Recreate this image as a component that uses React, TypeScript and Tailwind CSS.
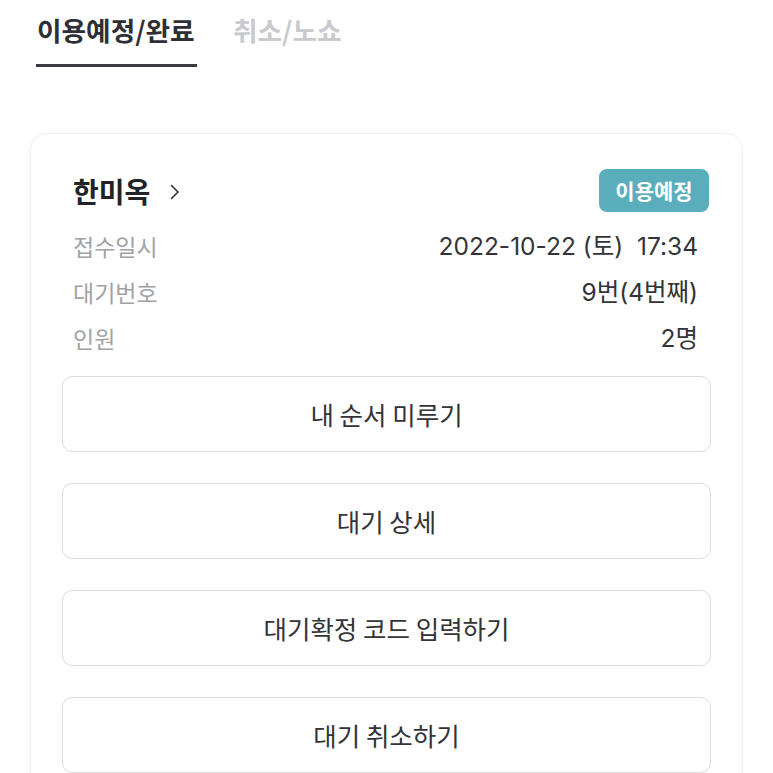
import React from "react";

const font = { fontFamily: '"Noto Sans CJK KR", "Noto Sans", sans-serif' };
const valFont = { fontFamily: 'Inter, "Noto Sans CJK KR", sans-serif' };

export default function App() {
  const rows: [string, string][] = [
    ["접수일시", "2022-10-22 (토)  17:34"],
    ["대기번호", "9번(4번째)"],
    ["인원", "2명"],
  ];
  const buttons = ["내 순서 미루기", "대기 상세", "대기확정 코드 입력하기", "대기 취소하기"];
  return (
    <div className="w-[773px] h-[773px] overflow-hidden bg-white px-[30px]" style={font}>
      <div className="flex pl-[6px] gap-[36px]">
        <div className="flex flex-col w-[161px]">
          <div className="pt-[12px] pb-[16px] pl-[1px] text-[26.7px] leading-[36px] font-bold text-[#2f3036] whitespace-pre">
            이용예정/완료
          </div>
          <div className="h-[3px] bg-[#3a3b42]" />
        </div>
        <div className="pt-[12px] text-[26.7px] leading-[36px] font-bold text-[#c9cace] whitespace-pre">
          취소/노쇼
        </div>
      </div>
      <div className="mt-[66px] rounded-t-[16px] border border-[#f0f0f2] px-[31px] pt-[35px] pb-[40px]">
        <div className="flex items-center justify-between pl-[11px] pr-[2px] h-[43px]">
          <div className="flex items-center gap-[19px]">
            <span className="text-[28px] font-bold text-[#222327] leading-none">한미옥</span>
            <svg width="12" height="18" viewBox="0 0 12 18" className="mt-[2px]">
              <path d="M2.5 2.5 L9 9 L2.5 15.5" fill="none" stroke="#333" strokeWidth="1.6" strokeLinecap="round" strokeLinejoin="round" />
            </svg>
          </div>
          <div className="h-[43px] w-[110px] rounded-[8px] bg-[#5aaebb] flex items-center justify-center text-white text-[21px] font-semibold">
            이용예정
          </div>
        </div>
        <div className="mt-[11px] pl-[11px] pr-[13px]">
          {rows.map(([k, v]) => (
            <div key={k} className="flex items-center justify-between h-[46px]">
              <span className="text-[#a2a2a6] text-[23px]">{k}</span>
              <span className="text-[#333438] whitespace-pre text-[24.5px]" style={valFont}>{v}</span>
            </div>
          ))}
        </div>
        <div className="mt-[15px] flex flex-col gap-[31px]">
          {buttons.map((b) => (
            <div
              key={b}
              className="h-[76px] rounded-[10px] border-[1.5px] border-[#dcdce1] flex items-center justify-center text-[25.5px] text-[#333438]"
            >
              {b}
            </div>
          ))}
        </div>
      </div>
    </div>
  );
}
